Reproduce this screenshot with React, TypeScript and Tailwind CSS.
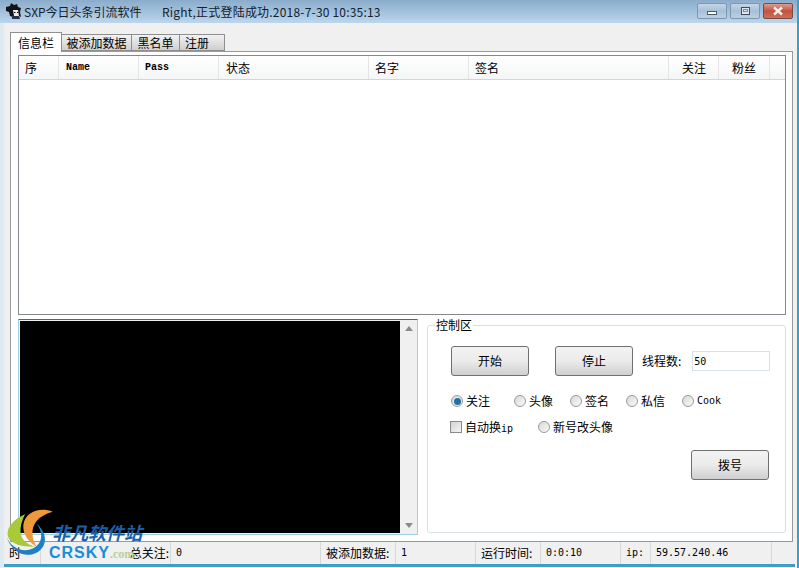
import React from 'react';

const cjk = { fontFamily: '"Noto Sans CJK SC", "Liberation Sans", sans-serif' };
const mono = { fontFamily: '"Liberation Mono", "DejaVu Sans Mono", "Noto Sans CJK SC", monospace' };
const monoLight = { fontFamily: '"DejaVu Sans Mono", "Liberation Mono", "Noto Sans CJK SC", monospace' };

const columns = [
  { label: '序', w: 'w-[40px]' },
  { label: 'Name', w: 'w-[80px] pl-[7px]', latin: true },
  { label: 'Pass', w: 'w-[80px] pl-[6px]', latin: true },
  { label: '状态', w: 'w-[150px] pl-[7px]' },
  { label: '名字', w: 'w-[100px] pl-[6px]' },
  { label: '签名', w: 'w-[200px] pl-[6px]' },
  { label: '关注', w: 'w-[50px] pl-[13px]' },
  { label: '粉丝', w: 'w-[51px] pl-[13px]' },
];

const tabs = [
  { label: '信息栏', w: 'w-[52px]', active: true },
  { label: '被添加数据', w: 'w-[70px]' },
  { label: '黑名单', w: 'w-[48px]' },
  { label: '注册', w: 'w-[45px] justify-start pl-[5px]' },
];

const statusCells = [
  { label: '时', w: 'w-[37px]' },
  { label: '总关注:', w: 'w-[130px]', align: 'justify-end pr-[1px]' },
  { label: '0', w: 'w-[150px]', latin: true },
  { label: '被添加数据:', w: 'w-[75px]' },
  { label: '1', w: 'w-[80px]', latin: true },
  { label: '运行时间:', w: 'w-[65px]' },
  { label: '0:0:10', w: 'w-[80px]', latin: true },
  { label: 'ip:', w: 'w-[30px]', latin: true },
  { label: '59.57.240.46', w: 'w-[121px]', latin: true },
];

function WinButton({ kind }: { kind: 'min' | 'max' | 'close' }) {
  if (kind === 'close') {
    return (
      <div className="w-[30px] h-[16px] rounded-[2px] border border-[#7d4a44] bg-gradient-to-b from-[#dc9c90] via-[#c4523f] to-[#c9705f] flex items-center justify-center">
        <svg width="14" height="10" viewBox="0 0 14 10">
          <path d="M3 1.5 L11 8.5 M11 1.5 L3 8.5" stroke="#f4f1ea" strokeWidth="2.4" fill="none" />
        </svg>
      </div>
    );
  }
  return (
    <div className="w-[30px] h-[16px] rounded-[2px] border border-[#7f97ad] bg-gradient-to-b from-[#c3d6e6] via-[#a7c0d8] to-[#bcd0e2] flex items-center justify-center">
      {kind === 'min' ? (
        <div className="w-[10px] h-[4px] mt-[5px] border border-[#4c5a68] bg-white" />
      ) : (
        <div className="w-[9px] h-[8px] border border-[#3f4c59] bg-[#dbe6ef] flex items-center justify-center">
          <div className="w-[5px] h-[3px] border border-[#7f8c99]" />
        </div>
      )}
    </div>
  );
}

function PushButton({ label }: { label: string }) {
  return (
    <button className="w-[78px] h-[30px] rounded-[3px] border border-[#707070] bg-gradient-to-b from-[#f3f3f3] via-[#ebebeb] to-[#cfcfcf] text-[12px] text-black">
      {label}
    </button>
  );
}

function Radio({ label, on, latin, w }: { label: string; on?: boolean; latin?: boolean; w: string }) {
  return (
    <div className={`${w} flex items-center gap-[3px]`}>
      <div className="w-[12px] h-[12px] rounded-full border border-[#9a9a9a] bg-gradient-to-br from-[#d8d8d8] to-[#fafafa] flex items-center justify-center">
        {on && <div className="w-[7px] h-[7px] rounded-full bg-[#1f6fa8]" />}
      </div>
      {latin ? (
        <span className="text-[10px] leading-none" style={monoLight}>{label}</span>
      ) : (
        <span className="text-[12px] leading-none">{label}</span>
      )}
    </div>
  );
}

function Logo() {
  return (
    <div className="absolute left-0 top-[505px] w-[170px] h-[63px]">
      <svg width="60" height="60" viewBox="0 0 180 180" className="absolute left-0 top-0">
        <path d="M108 55 C140 80 145 120 115 140 C85 160 35 150 18 90 C30 130 70 145 100 130 C130 115 130 80 108 55Z" fill="#1f7fc4" />
        <path d="M75 28 C35 45 10 80 30 105 C50 125 80 125 105 125 C70 115 45 90 75 28Z" fill="#a9c938" />
        <path d="M158 20 C120 5 75 20 70 60 C68 90 85 110 110 125 C90 95 85 40 158 20Z" fill="#ee9a3c" />
      </svg>
      <div className="absolute left-[52px] top-[18px] text-[18px] font-bold italic leading-none text-[#1c5fa8] whitespace-nowrap" style={cjk}>
        非凡软件站
      </div>
      <div className="absolute left-[49px] top-[40px] flex items-baseline whitespace-nowrap leading-none">
        <span className="text-[16px] font-bold tracking-[1px] text-[#1b8ed3]" style={{ fontFamily: '"Liberation Sans", sans-serif' }}>CRSKY</span>
        <span className="text-[12px] font-bold text-[#b9cf9a]" style={{ fontFamily: '"Liberation Serif", serif' }}>.com</span>
      </div>
    </div>
  );
}

export default function App() {
  return (
    <div className="relative w-[799px] h-[568px] overflow-hidden flex flex-col bg-[#f0f0f0] text-black border-r-2 border-r-[#3aa0c8]" style={cjk}>
      <div className="h-[23px] shrink-0 flex items-center pl-[5px] pr-[4px] bg-gradient-to-b from-[#8aaccb] to-[#bcd6ec]">
        <svg width="17" height="17" viewBox="0 0 17 17" className="shrink-0">
          <path d="M1 4 L5 3 L6 0 L9 2 L12 1 L13 4 L16 5 L15 9 L16 14 L12 12 L8 14 L5 13 L4 9 L1 8Z" fill="#12141c" />
          <path d="M8 7 L13 7 L14 13 L9 13Z" fill="#f1e8e6" />
          <path d="M9 9 h1.5 v1 h-1.5Z M12 9 h1.5 v1 h-1.5Z" fill="#12141c" />
          <path d="M7 13 L14 13 L15 16 L7 16Z" fill="#27324a" />
        </svg>
        <span className="ml-[2px] w-[138px] text-[12px] leading-none text-[#14212e] whitespace-nowrap">SXP今日头条引流软件</span>
        <span className="text-[12px] tracking-[0.2px] leading-none text-[#14212e] whitespace-nowrap">Right,正式登陆成功.2018-7-30 10:35:13</span>
        <div className="ml-auto flex items-center gap-[3px] -mt-[2px]">
          <WinButton kind="min" />
          <WinButton kind="max" />
          <WinButton kind="close" />
        </div>
      </div>

      <div className="flex-1 flex flex-col min-h-0 pt-[8px] pl-[10px] pr-[5px] border-l-[4px] border-l-[#dfeaf3]">
        <div className="relative z-10 flex items-end h-[20px] -ml-[4px]">
          {tabs.map((t) => (
            <div
              key={t.label}
              className={
                t.active
                  ? `${t.w} h-[20px] -mb-[1px] border border-b-0 border-[#8f8f8f] bg-white flex items-center justify-center text-[12px]`
                  : `${t.w} h-[17px] border border-[#8f8f8f] border-l-0 bg-gradient-to-b from-[#f2f2f2] to-[#cfcfcf] flex items-center justify-center text-[12px]`
              }
            >
              {t.label}
            </div>
          ))}
        </div>

        <div className="h-[491px] shrink-0 -ml-[4px] mr-[-1px] border border-[#9a9a9a] bg-white pt-[3px] pl-[7px] pr-[5px] flex flex-col gap-[4px]">
          <div className="h-[260px] w-[768px] border border-[#828790] bg-white">
            <div className="flex h-[24px] border-b border-[#d5d5d5] bg-gradient-to-b from-white to-[#f5f6f7]">
              {columns.map((c) => (
                <div key={c.label} className={`${c.w} h-full border-r border-[#e4e4e4] flex items-center text-[12px] ${c.label === '序' ? 'pl-[6px]' : ''}`}>
                  {c.latin ? <span className="text-[10px] font-bold" style={mono}>{c.label}</span> : c.label}
                </div>
              ))}
            </div>
          </div>

          <div className="flex flex-1 min-h-0">
            <div className="w-[400px] h-[216px] border border-[#9fd0e0] border-t-[#2f6fa8] bg-[#f0f0f0] flex">
              <div className="w-[380px] h-[212px] mt-[1px] ml-[1px] bg-black" />
              <div className="flex-1 flex flex-col items-center justify-between py-[6px]">
                <div className="w-0 h-0 border-x-[4px] border-x-transparent border-b-[5px] border-b-[#8a8a8a]" />
                <div className="w-0 h-0 border-x-[4px] border-x-transparent border-t-[5px] border-t-[#8a8a8a]" />
              </div>
            </div>

            <div className="relative ml-[9px] mt-[6px] w-[359px] h-[208px] rounded-[3px] border border-[#d5dfe5]">
              <div className="absolute left-[7px] -top-[8px] px-[1px] bg-white text-[12px] leading-[14px]">控制区</div>
              <div className="pl-[23px] pt-[20px]">
                <div className="flex items-center h-[30px]">
                  <PushButton label="开始" />
                  <div className="w-[26px]" />
                  <PushButton label="停止" />
                  <span className="ml-[9px] text-[12px]">线程数:</span>
                  <div className="ml-[11px] w-[78px] h-[20px] border border-[#d9e0e6] flex items-center pl-[1px] text-[10px]" style={monoLight}>50</div>
                </div>
                <div className="flex items-center h-[14px] mt-[18px]">
                  <Radio label="关注" on w="w-[63px]" />
                  <Radio label="头像" w="w-[56px]" />
                  <Radio label="签名" w="w-[56px]" />
                  <Radio label="私信" w="w-[56px]" />
                  <Radio label="Cook" latin w="w-[60px]" />
                </div>
                <div className="flex items-center h-[14px] mt-[12px] -ml-[1px]">
                  <div className="w-[88px] flex items-center gap-[3px]">
                    <div className="w-[12px] h-[12px] border border-[#8a8a8a] bg-gradient-to-br from-[#d4d4d4] to-[#f4f4f4]" />
                    <span className="text-[12px] leading-none whitespace-nowrap">自动换<span style={monoLight} className="text-[10px]">ip</span></span>
                  </div>
                  <Radio label="新号改头像" w="w-[100px]" />
                </div>
                <div className="flex justify-end pr-[16px] mt-[16px]">
                  <PushButton label="拨号" />
                </div>
              </div>
            </div>
          </div>
        </div>

        <div className="flex h-[22px] -ml-[10px] -mr-[3px] bg-[#f0f0f0] border-b-[3px] border-[#3aa0c8] box-content">
          {statusCells.map((s) => (
            <div key={s.label} className={`${s.w} shrink-0 flex items-center pl-[5px] border-r border-[#d8d8d8] text-[12px] leading-none whitespace-nowrap ${s.align ?? ''}`}>
              {s.latin ? <span className="text-[10px]" style={monoLight}>{s.label}</span> : s.label}
            </div>
          ))}
        </div>
      </div>

      <Logo />
    </div>
  );
}
